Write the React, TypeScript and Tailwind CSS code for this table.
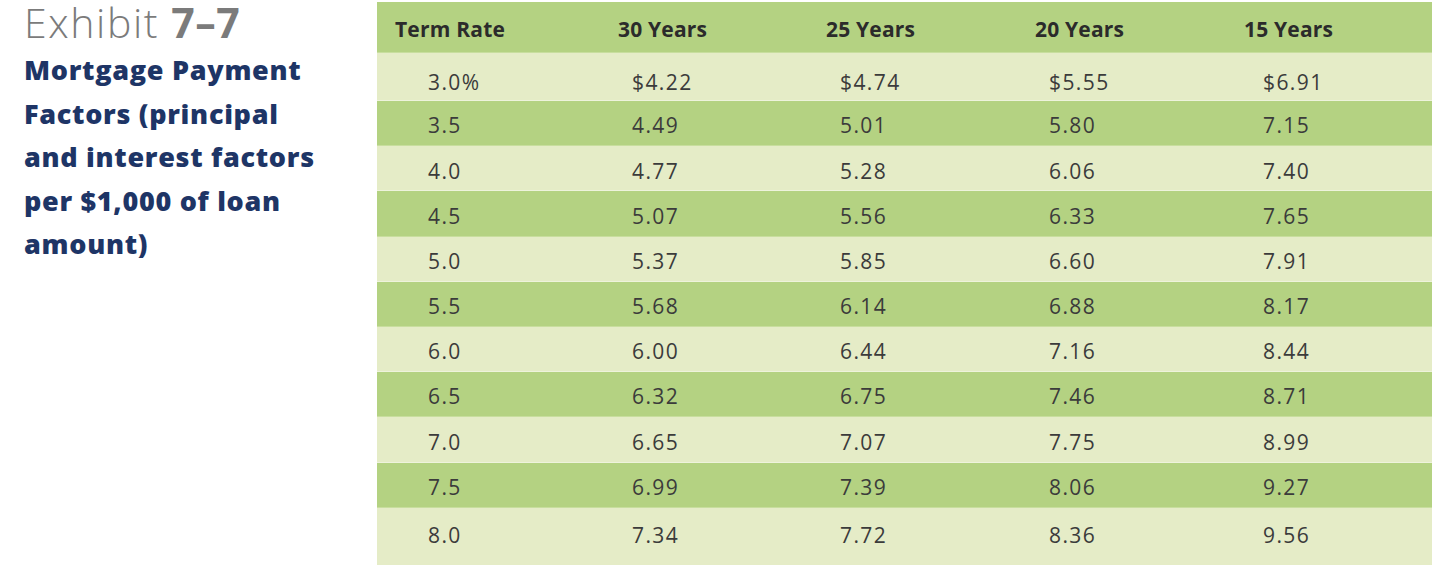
import React from "react";

const rows: [string, string, string, string, string][] = [
  ["3.0%", "$4.22", "$4.74", "$5.55", "$6.91"],
  ["3.5", "4.49", "5.01", "5.80", "7.15"],
  ["4.0", "4.77", "5.28", "6.06", "7.40"],
  ["4.5", "5.07", "5.56", "6.33", "7.65"],
  ["5.0", "5.37", "5.85", "6.60", "7.91"],
  ["5.5", "5.68", "6.14", "6.88", "8.17"],
  ["6.0", "6.00", "6.44", "7.16", "8.44"],
  ["6.5", "6.32", "6.75", "7.46", "8.71"],
  ["7.0", "6.65", "7.07", "7.75", "8.99"],
  ["7.5", "6.99", "7.39", "8.06", "9.27"],
  ["8.0", "7.34", "7.72", "8.36", "9.56"],
];

function rowClass(i: number) {
  const tone = i % 2 === 0 ? "bg-[#e5ecc7] border-[#eef3dc]" : "bg-[#b4d282] border-[#c8de9e]";
  if (i === 0) return `${tone} h-[48px] pt-[12px] border-b`;
  if (i === 10) return `${tone} h-[57px] pb-[1px]`;
  return `${tone} h-[45.2px] pt-[6px] border-b`;
}

export default function App() {
  return (
    <div className="flex w-[1432px] h-[574px] bg-white" style={{ fontFamily: '"Open Sans", "Liberation Sans", sans-serif' }}>
      <div className="w-[377px] shrink-0 pl-[24px]">
        <div className="text-[41px] leading-[44px] text-[#7b7b7b] font-light tracking-[1.6px] whitespace-nowrap">
          Exhibit <span className="font-bold tracking-[0.5px]">7–7</span>
        </div>
        <div className="mt-[4px] text-[27px] leading-[43.5px] font-extrabold text-[#1e3566] tracking-[0.7px] whitespace-nowrap">
          Mortgage Payment<br />Factors (principal<br />and interest factors<br />per $1,000 of loan<br />amount)
        </div>
      </div>
      <div className="flex-1 pt-[2px]">
        <div className="flex h-[51px] items-center pt-[5px] bg-[#b4d282] border-b border-[#c8de9e] text-[21px] font-bold text-[#2b2b2b] tracking-[0.2px]">
          <div className="w-[223px] pl-[18px]">Term Rate</div>
          <div className="w-[210px] pl-[18px]">30 Years</div>
          <div className="w-[210px] pl-[16px]">25 Years</div>
          <div className="w-[210px] pl-[15px]">20 Years</div>
          <div className="flex-1 pl-[14px]">15 Years</div>
        </div>
        {rows.map((r, i) => (
          <div key={i} className={`flex items-center text-[21px] text-[#3b3b3b] tracking-[1.4px] ${rowClass(i)}`}>
            <div className="w-[223px] pl-[51px]">{r[0]}</div>
            <div className="w-[210px] pl-[32px]">{r[1]}</div>
            <div className="w-[210px] pl-[30px]">{r[2]}</div>
            <div className="w-[210px] pl-[29px]">{r[3]}</div>
            <div className="flex-1 pl-[33px]">{r[4]}</div>
          </div>
        ))}
      </div>
    </div>
  );
}
